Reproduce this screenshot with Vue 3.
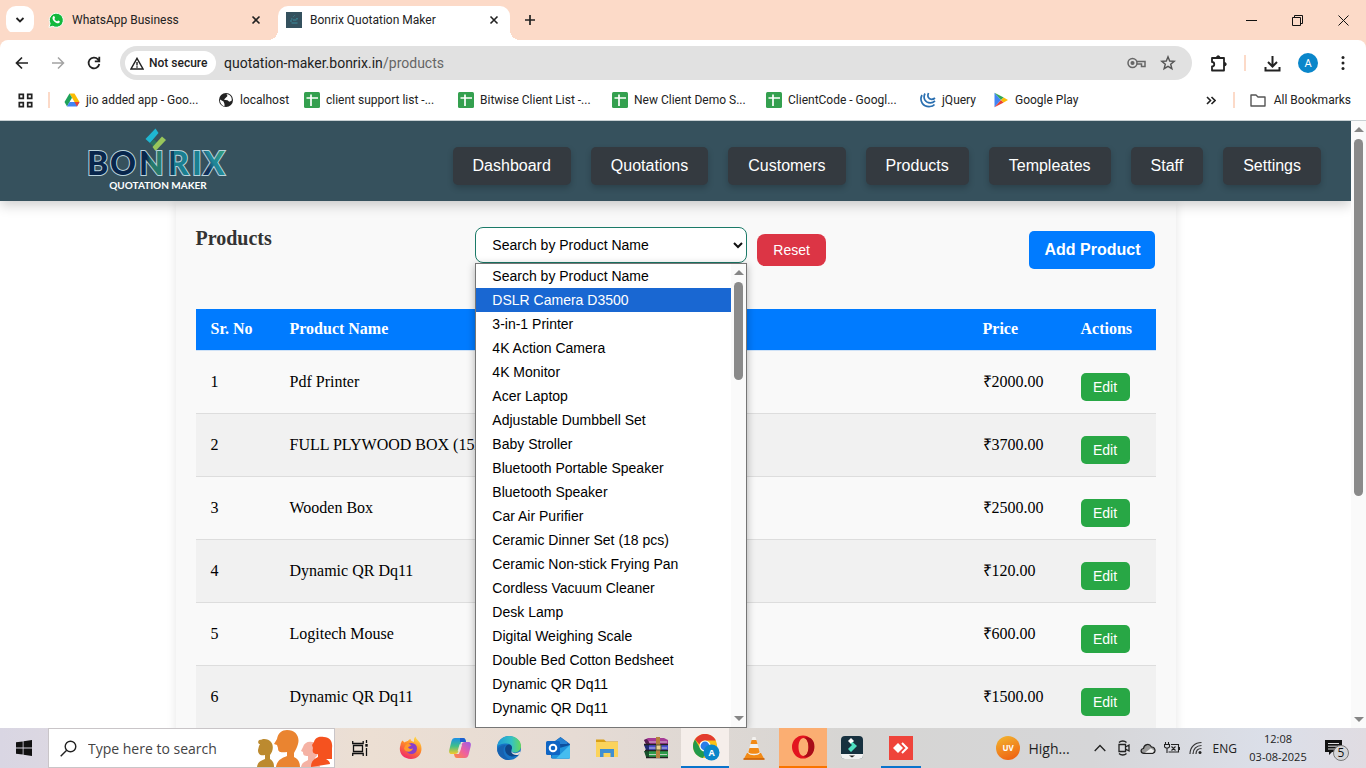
<script setup>
import { ref } from 'vue'

const bookmarks = [
  { icon: 'drive', label: 'jio added app - Goo...', size: 'long' },
  { icon: 'globe', label: 'localhost', size: 'host' },
  { icon: 'sheet', label: 'client support list -...', size: 'long' },
  { icon: 'sheet', label: 'Bitwise Client List -...', size: 'long' },
  { icon: 'sheet', label: 'New Client Demo S...', size: 'long' },
  { icon: 'sheet', label: 'ClientCode - Googl...', size: 'long' },
  { icon: 'jquery', label: 'jQuery', size: 'short' },
  { icon: 'play', label: 'Google Play', size: 'long' }
]

const nav = ['Dashboard', 'Quotations', 'Customers', 'Products', 'Templeates', 'Staff', 'Settings']

const options = [
  'Search by Product Name', 'DSLR Camera D3500', '3-in-1 Printer', '4K Action Camera', '4K Monitor',
  'Acer Laptop', 'Adjustable Dumbbell Set', 'Baby Stroller', 'Bluetooth Portable Speaker',
  'Bluetooth Speaker', 'Car Air Purifier', 'Ceramic Dinner Set (18 pcs)', 'Ceramic Non-stick Frying Pan',
  'Cordless Vacuum Cleaner', 'Desk Lamp', 'Digital Weighing Scale', 'Double Bed Cotton Bedsheet',
  'Dynamic QR Dq11', 'Dynamic QR Dq11'
]
const highlighted = ref(1)
const selected = ref('Search by Product Name')

const products = [
  { name: 'Pdf Printer', price: '₹2000.00' },
  { name: 'FULL PLYWOOD BOX (15x', price: '₹3700.00' },
  { name: 'Wooden Box', price: '₹2500.00' },
  { name: 'Dynamic QR Dq11', price: '₹120.00' },
  { name: 'Logitech Mouse', price: '₹600.00' },
  { name: 'Dynamic QR Dq11', price: '₹1500.00' }
]
</script>

<template>
  <div class="screen">
    <header class="tabs">
      <button class="tab-search" aria-label="Search tabs">
        <svg width="12" height="12" viewBox="0 0 12 12"><path d="M2.500 4l3.500 3.500L9.500 4" fill="none" stroke="#222" stroke-width="1.800" /></svg>
      </button>
      <div class="tab">
        <svg width="16" height="16" viewBox="0 0 16 16">
          <path d="M1 15.300l1.100-3.800A7 7 0 1 1 4.800 14.300z" fill="#12b83c" stroke="#fff" stroke-width="1" />
          <path d="M5.300 4.300c.5-.5 1-.3 1.200.2l.5 1.200c.1.500-.6.900-.6 1.200.5 1.200 1.500 2 2.600 2.400.5 0 .8-.9 1.200-.8l1.500.8c.4.300-.1 1.400-.8 1.800-2.500 1-6.500-2.600-6.400-5.200 0-.7.400-1.300.8-1.600z" fill="#fff" />
        </svg>
        <span class="tab-title">WhatsApp Business</span>
        <button class="tab-close" aria-label="Close tab">
          <svg width="10" height="10" viewBox="0 0 10 10"><path d="M1.500 1.500l7 7M8.500 1.500l-7 7" stroke="#222" stroke-width="1.600" /></svg>
        </button>
      </div>
      <div class="tab active">
        <svg width="16" height="16" viewBox="0 0 16 16">
          <rect width="16" height="16" fill="#34515e" />
          <path d="M7.500 4.500l1-1M5 7h1.500M7 8h3.500M4 9h2M5.500 11h6M10 6.800h2" stroke="#3a8c9c" stroke-width="1" />
        </svg>
        <span class="tab-title">Bonrix Quotation Maker</span>
        <button class="tab-close" aria-label="Close tab">
          <svg width="10" height="10" viewBox="0 0 10 10"><path d="M1.500 1.500l7 7M8.500 1.500l-7 7" stroke="#222" stroke-width="1.600" /></svg>
        </button>
      </div>
      <button class="tab-new" aria-label="New tab">
        <svg width="12" height="12" viewBox="0 0 12 12"><path d="M6 1v10M1 6h10" stroke="#222" stroke-width="1.700" /></svg>
      </button>
      <div class="win">
        <button aria-label="Minimize"><svg width="11" height="11" viewBox="0 0 11 11"><path d="M0 5.500h11" stroke="#111" /></svg></button>
        <button aria-label="Restore"><svg width="11" height="11" viewBox="0 0 11 11" fill="none" stroke="#111"><path d="M.5 2.500h8v8h-8zM2.500 2.500v-2h8v8h-2" /></svg></button>
        <button aria-label="Close window"><svg width="11" height="11" viewBox="0 0 11 11"><path d="M.5 .5l10 10M10.500 .5l-10 10" stroke="#111" /></svg></button>
      </div>
    </header>

    <div class="toolbar">
      <button class="tool" aria-label="Back"><svg width="14" height="14" viewBox="0 0 14 14" fill="none" stroke="#222" stroke-width="1.700"><path d="M13 7H2M7 1.500L1.500 7 7 12.500" /></svg></button>
      <button class="tool" aria-label="Forward"><svg width="14" height="14" viewBox="0 0 14 14" fill="none" stroke="#a3a3a3" stroke-width="1.500"><path d="M1 7h11M7 1.500L12.500 7 7 12.500" /></svg></button>
      <button class="tool" aria-label="Reload"><svg width="14" height="14" viewBox="0 0 14 14" fill="none" stroke="#222" stroke-width="1.800"><path d="M12.300 8A5.400 5.400 0 1 1 11 3.300L12.300 4.600M12.300 .8v4.500H7.800" /></svg></button>
      <div class="omnibox">
        <button class="secure">
          <svg width="14" height="13" viewBox="0 0 14 13" fill="none" stroke="#222" stroke-width="1.400"><path d="M7 1.300L13 12H1zM7 5v3.500M7 9.300v1.400" /></svg>
          <span>Not secure</span>
        </button>
        <div class="url"><input aria-label="Address" value="quotation-maker.bonrix.in" /><span>/products</span></div>
        <button class="omni-btn" aria-label="Passwords">
          <svg width="19" height="12" viewBox="0 0 19 12" fill="none" stroke="#666" stroke-width="1.500"><circle cx="5.500" cy="6" r="4.500" /><circle cx="5.500" cy="6" r="1.300" fill="#666" /><path d="M9.800 4.500H18v5h-3.500V7H9.800" /></svg>
        </button>
        <button class="omni-btn" aria-label="Bookmark this page">
          <svg width="16" height="16" viewBox="0 0 16 16" fill="none" stroke="#555" stroke-width="1.400"><path d="M8 1.800l1.700 4.200 4.500.3-3.500 2.900 1.200 4.500L8 11.300l-3.900 2.400 1.200-4.500L1.800 6.300 6.300 6z" /></svg>
        </button>
      </div>
      <button class="tool ext" aria-label="Extensions">
        <svg width="18" height="17" viewBox="0 0 18 17" fill="none" stroke="#222" stroke-width="1.800" stroke-linejoin="round"><path d="M2 3h12v12.500H2v-4c3 0 3-4.500 0-4.500z" /><path d="M6.500 2.500a1.700 1.700 0 0 1 3.400 0zM14.500 7.500a1.700 1.700 0 0 1 0 3.400z" fill="#222" stroke-width="1" /></svg>
      </button>
      <i class="bar"></i>
      <button class="tool" aria-label="Downloads"><svg width="17" height="17" viewBox="0 0 17 17" fill="none" stroke="#222" stroke-width="2"><path d="M8.500 1v10M4 7l4.500 4.500L13 7M1.500 12v3.500h14V12" /></svg></button>
      <button class="avatar">A</button>
      <button class="tool more" aria-label="Menu"><svg width="4" height="16" viewBox="0 0 4 16" fill="#222"><circle cx="2" cy="2.500" r="1.500" /><circle cx="2" cy="8" r="1.500" /><circle cx="2" cy="13.500" r="1.500" /></svg></button>
    </div>

    <nav class="bookmarks">
      <button class="apps" aria-label="Apps"><svg width="15" height="15" viewBox="0 0 15 15" fill="none" stroke="#222" stroke-width="1.700"><path d="M1.300 1.300h4v4h-4zM9.700 1.300h4v4h-4zM1.300 9.700h4v4h-4zM9.700 9.700h4v4h-4z" /></svg></button>
      <i class="bar"></i>
      <a v-for="(b, i) in bookmarks" :key="i" href="#" class="bm" :class="b.size">
        <svg v-if="b.icon === 'drive'" width="16" height="16" viewBox="0 0 16 16">
          <path d="M5.500 1.500h5L15.500 10h-5z" fill="#fbbc04" /><path d="M5.500 1.500L8 5.800 3 14.500.5 10z" fill="#1ea25a" /><path d="M3 14.500L5.500 10h10L13 14.500z" fill="#4285f4" /><path d="M13 14.500L10.500 10h5z" fill="#ea4335" />
        </svg>
        <svg v-else-if="b.icon === 'globe'" width="16" height="16" viewBox="0 0 16 16">
          <circle cx="8" cy="8" r="7" fill="#222" /><path d="M2 7.500l3.500 2 1 2.500v2.300C4 13.500 1.800 11 2 7.500zM8.500 2l1 2L7 6.500l-1 1.200 3.500.5 1.800 1.600 2.300-1c.7-2-.3-4.500-2.500-6z" fill="#fff" />
        </svg>
        <svg v-else-if="b.icon === 'sheet'" width="16" height="16" viewBox="0 0 16 16">
          <rect width="16" height="16" rx="1.500" fill="#34a04f" /><path d="M2.500 6h11.500M7 2.500V14" stroke="#fff" stroke-width="1.700" />
        </svg>
        <svg v-else-if="b.icon === 'jquery'" width="16" height="16" viewBox="0 0 16 16" fill="none" stroke="#2a6fb0" stroke-width="1.700">
          <path d="M2 3c-3 6 1 12 8 11.500 2 0 3.500-.8 4.500-2M5 1.500c-2.500 5 .5 9.500 5.500 9.300 2 0 3.300-.8 4.500-2M8.500 1c-1.500 3.500 0 6.300 3 6.300 1.500 0 2.500-.4 3.500-1.300" />
        </svg>
        <svg v-else width="16" height="16" viewBox="0 0 16 16">
          <path d="M1.500.8v14.500L8 8z" fill="#4285f4" /><path d="M1.500.8L8 8l2.700-2.600z" fill="#34a853" /><path d="M1.500 15.300L8 8l2.700 2.600z" fill="#ea4335" /><path d="M10.700 5.400L15 8l-4.300 2.600L8 8z" fill="#fbbc04" />
        </svg>
        <span>{{ b.label }}</span>
      </a>
      <button class="overflow" aria-label="More bookmarks"><svg width="10" height="9" viewBox="0 0 10 9" fill="none" stroke="#222" stroke-width="1.600"><path d="M1 1l3.500 3.500L1 8M5.500 1L9 4.500 5.500 8" /></svg></button>
      <i class="bar"></i>
      <a href="#" class="bm all">
        <svg width="16" height="13" viewBox="0 0 16 13" fill="none" stroke="#555" stroke-width="1.400"><path d="M1 1h5l2 2h7v9H1z" stroke-linejoin="round" /></svg>
        <span>All Bookmarks</span>
      </a>
    </nav>

    <div class="viewport">
      <div class="page">
        <header class="site">
          <svg class="logo" width="150" height="80" viewBox="0 0 150 80" role="img" aria-label="Bonrix Quotation Maker">
            <defs>
              <linearGradient id="gn" x1="0" x2="1"><stop offset=".3" stop-color="#08264c" /><stop offset=".5" stop-color="#277a6c" /></linearGradient>
              <linearGradient id="gr" x1="0" x2="1"><stop offset=".28" stop-color="#0d4164" /><stop offset=".3" stop-color="#1a7f91" /></linearGradient>
              <linearGradient id="gx" x1="0" y1="1" x2="1" y2="0"><stop offset=".3" stop-color="#10305a" /><stop offset=".5" stop-color="#20869a" /><stop offset="1" stop-color="#3aa46d" /></linearGradient>
            </defs>
            <path d="M64.500 18L74.500 7.500 77.500 12 69 22z" fill="#1fb6d2" />
            <path d="M69 22l4-3.500 3.500 3.500-3.500 4z" fill="#2b7460" />
            <path d="M71.500 26L81 15.500l4 3.500L74.500 30z" fill="#98c65b" />
            <g class="word">
              <text x="6" y="54" fill="#08264c">B</text>
              <text x="29" y="54" fill="#08264c">O</text>
              <text x="58" y="54" fill="url(#gn)">N</text>
              <text x="87" y="54" fill="url(#gr)">R</text>
              <text x="111" y="54" fill="#1a7f91">I</text>
              <text x="122" y="54" fill="url(#gx)">X</text>
            </g>
            <text x="77" y="68" class="sub">QUOTATION MAKER</text>
          </svg>
          <nav class="menu"><a v-for="n in nav" :key="n" href="#">{{ n }}</a></nav>
        </header>
        <main class="card">
          <div class="head">
            <h1>Products</h1>
            <div class="filter">
              <div class="picker">
                <select v-model="selected" aria-label="Search by product name"><option>Search by Product Name</option></select>
                <svg class="caret" width="10" height="7" viewBox="0 0 10 7"><path d="M1 1l4 4 4-4" fill="none" stroke="#111" stroke-width="2" /></svg>
                <div class="popup">
                  <ul role="listbox" aria-label="Products">
                    <li v-for="(o, i) in options" :key="i" role="option" :aria-selected="i === highlighted" :class="{ on: i === highlighted }" @mouseenter="highlighted = i">{{ o }}</li>
                  </ul>
                  <div class="scroll">
                    <i class="up"></i><i class="thumb"></i><i class="down"></i>
                  </div>
                </div>
              </div>
              <button class="reset">Reset</button>
            </div>
            <button class="add">Add Product</button>
          </div>
          <table>
            <thead>
              <tr><th class="c-no">Sr. No</th><th>Product Name</th><th class="c-price">Price</th><th class="c-act">Actions</th></tr>
            </thead>
            <tbody>
              <tr v-for="(p, i) in products" :key="i">
                <td>{{ i + 1 }}</td><td>{{ p.name }}</td><td>{{ p.price }}</td><td><button class="edit">Edit</button></td>
              </tr>
            </tbody>
          </table>
        </main>
      </div>
      <div class="scroll main-scroll"><i class="up"></i><i class="thumb"></i><i class="down"></i></div>
    </div>

    <footer class="taskbar">
      <button class="start" aria-label="Start"><svg width="16" height="16" viewBox="0 0 16 16" fill="#111"><path d="M0 2.300L6.700 1.400V7.600H0zM7.500 1.300L16 0v7.600H7.500zM0 8.400h6.700v6.200L0 13.700zM7.500 8.400H16V16l-8.500-1.300z" /></svg></button>
      <div class="search">
        <svg width="17" height="17" viewBox="0 0 17 17" fill="none" stroke="#222" stroke-width="1.400"><circle cx="10.500" cy="6.500" r="5.300" /><path d="M6.700 10.300L.7 16.300" /></svg>
        <input aria-label="Search" placeholder="Type here to search" />
        <svg class="art" width="78" height="38" viewBox="0 0 78 38">
          <path d="M45 38c1-5 4-5 7-7v-4c-4 0-5-1-5-4l-2-1 2-4c1-4 5-6 9-5 6 0 8 5 7 9-1 4-3 6-4 7v3c3 2 5 4 5 6z" fill="#f5b2a4" />
          <path d="M1 38c1-6 4-6 8-8v-4c-5 1-7-1-7-5l1-4 1-2c-3 0-2-5 1-4 2-2 8-1 10 2 3 4 2 9-1 13v4c3 2 4 4 4 8z" fill="#bc8a2f" />
          <path d="M20 38c1-7 6-9 11-11v-4c-7 1-9 0-9-4l-1-3-3-1 3-5C22 4 26 1 31 1c9 0 13 7 11 14-1 4-3 7-4 9v4c4 2 6 5 6 10z" fill="#ea8430" />
          <path d="M55 38c0-6 3-8 7-10v-3c-5 0-6-2-5-6l-1-3 2-3c1-5 6-6 10-5 6 0 9 5 8 11v11h-6c3 2 4 3 4 5z" fill="#f5521f" />
        </svg>
      </div>
      <div class="apps-row">
        <button class="app tv" aria-label="Task view"><svg width="17" height="17" viewBox="0 0 17 17" fill="none" stroke="#111" stroke-width="1.300"><path d="M.7 1v2.500h10.500V1M1.500 5.500h9v6h-9zM.7 16v-2.500h10.500V16M14.500 0v3M14.500 8v8" /><path d="M13.300 4h2.400v2.700h-2.400z" fill="#111" stroke="none" /></svg></button>
        <button class="app" aria-label="Firefox"><svg width="24" height="24" viewBox="0 0 24 24">
          <defs><linearGradient id="ff" x1=".8" y1="0" x2=".3" y2="1"><stop offset="0" stop-color="#ffe14a" /><stop offset=".45" stop-color="#ff8a28" /><stop offset="1" stop-color="#f0266c" /></linearGradient></defs>
          <path d="M3.500 4.500l2 2C7 5.500 8 5 9 5c.5-1 1.500-2 2.500-2 0 2 2 2.500 3.500 3-.3-2 0-4 1.500-5.500.5 3 3.500 4 5 7.500 3 7-1 15-9.500 15S-1 16 1.500 9c.3-2 1-3.500 2-4.500z" fill="url(#ff)" />
          <circle cx="12.500" cy="12.500" r="5.500" fill="#8a3fc8" /><path d="M6 10c2-3 5-2 6.500-.5-1.500.2-2 1.500-3.500 1.500.5 2 3 2.500 5 1.500-1 4-7.500 4.500-9 0z" fill="#ff9a2b" />
        </svg></button>
        <button class="app" aria-label="Copilot"><svg width="24" height="24" viewBox="0 0 24 24">
          <defs><linearGradient id="cp1" x1="0" y1="0" x2="0" y2="1"><stop offset="0" stop-color="#1c8fe8" /><stop offset=".5" stop-color="#3fbf8a" /><stop offset="1" stop-color="#f5c92a" /></linearGradient><linearGradient id="cp2" x1="1" y1="0" x2="0" y2="1"><stop offset="0" stop-color="#9a5ce8" /><stop offset=".5" stop-color="#ee5fa0" /><stop offset="1" stop-color="#ff8a3c" /></linearGradient></defs>
          <path d="M7 2h8c2 0 2.500 1.500 3 4l-5 0-2.500 9c-.5 2-1.500 3-3.500 3H3.500C1 18 .7 15.500 1.500 13l2-8C4.200 3 5 2 7 2z" fill="url(#cp1)" />
          <path d="M12 2h3c2 0 2.500 1.500 3 4h-6z" fill="#1d5fd0" />
          <path d="M17 22H9c-2 0-2.500-1.500-3-4l5 0L13.500 9c.5-2 1.500-3 3.500-3h3.500c2.500 0 2.800 2.500 2 5l-2 8c-.7 2-1.500 3-3.500 3z" fill="url(#cp2)" />
          <path d="M10.800 15.500l2-7" stroke="#eadfd8" stroke-width="2.500" />
        </svg></button>
        <button class="app" aria-label="Edge"><svg width="24" height="24" viewBox="0 0 24 24">
          <defs><linearGradient id="ed" x1="0" x2="1"><stop offset="0" stop-color="#1f9ad8" /><stop offset=".6" stop-color="#35c1c4" /><stop offset="1" stop-color="#66d95a" /></linearGradient></defs>
          <circle cx="12" cy="12" r="12" fill="#1673c4" />
          <path d="M0 11C1 4 6 0 12 0c7 0 12 4.500 12 10 0 4-3 6.500-6.500 6.500-3 0-4-1.500-3-3C16 10 13.500 7.500 9.500 7.500 5 7.500 1 9 0 11z" fill="url(#ed)" />
          <path d="M9 9c-4 3-3.500 11 4 15-7 .5-12-4-12.800-10C2 10 5 9 9 9z" fill="#1762b0" />
          <path d="M14.500 13.500c1-2 .5-4-2-5-4 0-5 4-4 7 1.500 4.500 7 6.500 13 3.500-4 .5-8-1-7-5.500z" fill="#0f4687" />
          <path d="M14.300 15c1 2.500 5 3 8.700.5l.5 1.500-2.500 2c-3.500.2-6.700-1-6.700-4z" fill="#e9ded8" />
        </svg></button>
        <button class="app" aria-label="Outlook"><svg width="24" height="24" viewBox="0 0 24 24">
          <path d="M5 8L14.500 1 24 8v13c0 1-.7 1.500-1.500 1.500h-16C5.500 22.500 5 22 5 21z" fill="#0f5fb8" /><path d="M8 6l6.500-4.500L21 6v9H8z" fill="#2580d2" /><path d="M14 8h8l2 1-9.500 7z" fill="#0d4f9e" /><path d="M5 21l5-8L24 9v12c0 1-.7 1.500-1.500 1.500h-16z" fill="#1f93dc" /><path d="M24 9L10 22.500h12.500c1 0 1.500-.5 1.500-1.500z" fill="#45bdf0" />
          <rect y="5" width="14" height="14" rx="1.500" fill="#0f65c4" /><circle cx="7" cy="12" r="3.300" fill="none" stroke="#fff" stroke-width="2" />
        </svg></button>
        <button class="app" aria-label="File Explorer"><svg width="24" height="24" viewBox="0 0 24 24">
          <path d="M1 3.500h8l2 2H23V20H1z" fill="#d9a018" /><path d="M1 6h22v15H1z" fill="#fbd35b" /><path d="M5 13h14v8h-3.500v-4h-7v4H5z" fill="#3f8fd2" />
        </svg></button>
        <button class="app" aria-label="WinRAR"><svg width="26" height="22" viewBox="0 0 26 22">
          <path d="M1 3l4-2h16l4 2v4H3z" fill="#a63a96" /><path d="M1 3l3-1 3 5H3z" fill="#552050" /><path d="M2 7h23v6H4z" fill="#4a4fd0" /><path d="M1 8h5v5H3z" fill="#222b73" /><path d="M3 13h22v7H4z" fill="#2e9b4a" /><path d="M1 14h5v6H3z" fill="#17502a" /><path d="M1 7.500h24M2 13.500h23M3 20.500h22" stroke="#222" stroke-width="1.300" /><path d="M6 5h18M6 11h18M6 17.500h18" stroke="#ddd" stroke-width=".8" />
          <path d="M13 0h4v21h-4z" fill="#b5813d" /><path d="M13 8h5v5h-5z" fill="#ead092" stroke="#553" />
        </svg></button>
        <button class="app current" aria-label="Chrome"><svg width="28" height="28" viewBox="0 0 28 28">
          <circle cx="12" cy="13" r="12" fill="#fbc116" /><path d="M12 1c5 0 9 2.500 10.800 6.500H12c-3 0-5 2-5.300 4L2 6.500C4 3 8 1 12 1z" fill="#e33b2e" /><path d="M2 6.500l5.300 9C8.500 18 11 18.800 13.500 18L10 25C4 24 0 19 0 13c0-2.500.8-4.800 2-6.500z" fill="#229a4b" />
          <circle cx="12" cy="13" r="5.600" fill="#fff" /><circle cx="12" cy="13" r="4.400" fill="#2a7de8" />
          <circle cx="18.500" cy="19.500" r="8" fill="#0a86ca" /><text x="18.500" y="23" class="mini">A</text>
        </svg></button>
        <button class="app" aria-label="VLC"><svg width="22" height="24" viewBox="0 0 22 24">
          <path d="M4 17h14l3.500 6.500H.5z" fill="#f28a16" /><path d="M9.500 1h3L17 17c-1.500 3-10.500 3-12 0z" fill="#f3f1ee" /><path d="M8.600 4h4.800l1.100 4H7.500zM6.500 12h9l1.200 4.300c-2 2-9.500 2-11.400 0z" fill="#f28a16" /><path d="M.5 23h21" stroke="#c85f0a" stroke-width="1.500" />
        </svg></button>
        <button class="app opera" aria-label="Opera"><svg width="24" height="24" viewBox="0 0 24 24">
          <path fill-rule="evenodd" d="M12 .5a11 11.500 0 1 0 0 23 11 11.500 0 0 0 0-23zM12.500 3c3 0 5 4 5 9s-2 9-5 9-5-4-5-9 2-9 5-9z" fill="#e3141f" /><path d="M13 3c7-3 12 4 10 12-1.500 6-7 8.500-10.500 6 3 0 5-4 5-9s-2-9-4.500-9z" fill="#a80d18" />
        </svg></button>
        <button class="app" aria-label="Filmora"><svg width="22" height="24" viewBox="0 0 22 24">
          <rect width="22" height="23" rx="4" fill="#17313f" /><path d="M7 5l3-3 3 3-3 3z" fill="#fff" /><path d="M7 13l4-4-1.500-1.500 2-1.500 4.500 4-6 6z" fill="#4fe0c2" /><path d="M0 18h22v1c0 3-1.500 4-4 4H4c-2.500 0-4-1-4-4z" fill="#f2f2f2" /><path d="M8 19.500h6l-3 2z" fill="#222" />
        </svg></button>
        <button class="app desk" aria-label="AnyDesk"><svg width="24" height="24" viewBox="0 0 24 24">
          <rect width="24" height="24" fill="#ef443b" /><path d="M4 12l5-5 5 5-5 5z" fill="#fff" /><path d="M13 7l5 5-5 5" fill="none" stroke="#fff" stroke-width="2" />
        </svg></button>
      </div>
      <button class="weather">
        <svg width="24" height="24" viewBox="0 0 24 24"><defs><linearGradient id="uv" x1=".2" y1="0" x2=".6" y2="1"><stop offset="0" stop-color="#f2b22e" /><stop offset="1" stop-color="#ef6413" /></linearGradient></defs><circle cx="12" cy="12" r="12" fill="url(#uv)" /><text x="12" y="15" class="mini uv">UV</text></svg>
        <span>High...</span>
      </button>
      <div class="tray">
        <svg width="12" height="8" viewBox="0 0 12 8" fill="none" stroke="#222" stroke-width="1.300"><path d="M.7 7L6 1.500 11.300 7" /></svg>
        <svg width="12" height="16" viewBox="0 0 12 16" fill="none" stroke="#222" stroke-width="1.300"><path d="M1 4.500h6.500v7H1zM7.500 7l3.500-2v6L7.500 9M1 2.500c2-2 5.500-2 7.500 0M1 13.500c2 2 5.500 2 7.500 0" /></svg>
        <svg width="16" height="11" viewBox="0 0 16 11" fill="#999" stroke="#222" stroke-width="1.200"><path d="M4 10.300C.5 10.300 0 6 3.500 5.500 4 1.500 9-.5 11.500 4c3.500-.3 5 5 1.500 6.300z" /><path d="M5 9.700l6-4.400 3 2.500-1.500 1.900z" fill="#eee" stroke="none" /></svg>
        <svg width="16" height="12" viewBox="0 0 16 12" fill="none" stroke="#222" stroke-width="1.100"><path d="M1.500 0v2.500M4.500 0v2.500M.5 2.500h5V5l-1.500 1H2L.5 5zM3 6v5M7 2.500h7.500v7.500H4.500M15.500 5v3M7.500 4.500l4 4M11.500 4.500l-4 4" /></svg>
        <svg width="14" height="14" viewBox="0 0 14 14" fill="none" stroke="#333" stroke-width="1.200"><path d="M1 13C1 6 6 1.500 12.500 1.500M4 13c0-5 3.500-8.500 8.500-8.500M7 13c0-3.500 2-5.500 5.500-5.500" /><circle cx="11" cy="11.500" r="1.500" fill="#222" stroke="none" /></svg>
      </div>
      <span class="lang">ENG</span>
      <div class="clock"><span>12:08</span><span>03-08-2025</span></div>
      <button class="notes" aria-label="Notifications">
        <svg width="26" height="26" viewBox="0 0 26 26"><path d="M1 5h17v12H8l-3 3v-3H1z" fill="#111" /><path d="M4 8.500h11M4 11.200h11M4 14h7" stroke="#ddd" stroke-width="1" /><circle cx="17" cy="18" r="7.500" fill="#d5d5d8" stroke="#777" /><text x="17" y="22" class="mini five">5</text></svg>
      </button>
    </footer>
  </div>
</template>

<style>
html, body { margin: 0; overflow: hidden; }
</style>

<style scoped>
* { box-sizing: border-box; }
button, input, select { margin: 0; padding: 0; border: 0; background: none; font: inherit; color: inherit; outline: none; }
a { color: inherit; text-decoration: none; }
svg { flex: none; display: block; }
.screen { display: flex; flex-direction: column; height: 100vh; background: #fff; font: 12px Roboto, "Open Sans", sans-serif; color: #222; overflow: hidden; }
.bar { width: 2px; height: 16px; background: #fcdac8; flex: none; }

.tabs { display: flex; align-items: flex-end; height: 40px; flex: none; padding-left: 6px; background: #fcdac8; }
.tab-search { display: grid; place-items: center; width: 28px; height: 28px; margin-bottom: 6px; border-radius: 10px; background: #fff; }
.tab { position: relative; display: flex; align-items: center; width: 232px; height: 34px; padding: 0 11px 6px 8px; gap: 8px; margin-left: 6px; border-radius: 10px 10px 0 0; }
.tab.active { background: #fff; }
.tab.active::before, .tab.active::after { content: ""; position: absolute; bottom: 0; width: 10px; height: 10px; }
.tab.active::before { left: -10px; background: radial-gradient(circle at 0 0, transparent 10px, #fff 10px); }
.tab.active::after { right: -10px; background: radial-gradient(circle at 100% 0, transparent 10px, #fff 10px); }
.tab-title { flex: 1; white-space: nowrap; }
.tab-new { margin: 0 0 14px 14px; }
.win { display: flex; margin-left: auto; height: 40px; }
.win button { display: grid; place-items: center; width: 46px; }

.toolbar { display: flex; align-items: center; height: 46px; flex: none; padding: 0 6px 0 4px; background: #fff; border-radius: 8px 8px 0 0; box-shadow: 0 -8px 0 0 #fcdac8; }
.tool { display: grid; place-items: center; width: 36px; height: 36px; flex: none; }
.omnibox { display: flex; align-items: center; flex: 1; height: 34px; margin-left: 8px; padding: 0 16px 0 5px; border-radius: 17px; background: #e1e1e1; }
.secure { display: flex; align-items: center; gap: 5px; width: 91px; height: 24px; padding-left: 5px; border-radius: 12px; background: #fff; font-weight: 500; white-space: nowrap; }
.url { display: flex; flex: 1; margin-left: 8px; font-size: 14px; color: #666; }
.url input { width: 159px; color: #222; }
.omni-btn { margin-left: 14px; }
.ext { margin-left: 9px; margin-right: 7px; }
.toolbar .bar + .tool { margin-left: 8px; }
.avatar { width: 20px; height: 20px; margin-left: 8px; border-radius: 50%; background: #0a86ca; color: #fff; font-size: 11px; }
.more { margin-left: 8px; width: 34px; }

.bookmarks { display: flex; align-items: center; height: 34px; flex: none; padding: 0 15px 6px 18px; background: #fff; }
.apps { margin-right: 15px; }
.bm { display: flex; align-items: center; gap: 6px; flex: none; white-space: nowrap; }
.apps + .bar + .bm { margin-left: 14px; }
.bm.long { width: 154px; }
.bm.host { width: 86px; }
.bm.short { width: 73px; }
.overflow { margin-left: auto; margin-right: 17px; }
.bm.all { margin-left: 15px; gap: 8px; }

.viewport { display: flex; flex: 1; min-height: 0; border-top: 1px solid #c8d0d3; overflow: hidden; }
.page { flex: 1; min-width: 0; overflow: hidden; background: #fff; }
.scroll { position: relative; display: flex; flex-direction: column; align-items: center; width: 15px; flex: none; background: #fafafa; padding: 6px 0; }
.up { border: 5px solid transparent; border-top: 0; border-bottom: 5px solid #868686; flex: none; }
.down { border: 5px solid transparent; border-bottom: 0; border-top: 5px solid #868686; margin-top: auto; flex: none; }
.thumb { width: 9px; height: 98px; margin-top: 7px; border-radius: 5px; background: #8a8a8a; flex: none; }
.main-scroll .thumb { height: 60%; }

.site { position: relative; z-index: 2; display: flex; align-items: center; height: 80px; padding: 0 30px 0 81px; background: #36515d; box-shadow: 0 4px 12px rgba(0, 0, 0, .2); }
.word { font: 900 32px Lato, sans-serif; stroke: #b9d3dc; stroke-width: 2px; paint-order: stroke; }
.sub { font: 700 10px Lato, sans-serif; fill: #fff; text-anchor: middle; }
.menu { display: flex; gap: 20px; margin: 10px 0 0 auto; font: 16px/18px "Liberation Sans", sans-serif; color: #fff; }
.menu a { padding: 10px 20px; border-radius: 5px; background: #343a40; box-shadow: 0 3px 6px rgba(0, 0, 0, .2); }

.card { max-width: 1000px; min-height: 800px; margin: 0 auto; padding: 20px; background: #f9f9f9; box-shadow: 0 0 10px rgba(0, 0, 0, .1); font: 16px/18px "Liberation Serif", serif; color: #000; }
.head { display: flex; justify-content: space-between; align-items: flex-start; height: 88px; }
h1 { margin: 6px 0 0; font-size: 20px; line-height: 23px; color: #333; }
.filter { display: flex; align-items: flex-start; gap: 10px; font: 14px/16px "Liberation Sans", sans-serif; }
.picker { position: relative; width: 272px; margin-top: 6px; }
.picker select { display: block; appearance: none; width: 100%; height: 36px; padding: 0 16px; border: 1px solid #1b7a68; border-radius: 8px; background: #fff; color: #000; }
.caret { position: absolute; right: 4px; top: 15px; }
.popup { position: absolute; top: 100%; left: 0; right: 0; display: flex; height: 465px; border: 1px solid #767676; background: #fff; box-shadow: 0 2px 8px rgba(0, 0, 0, .3); }
.popup ul { flex: 1; margin: 0; padding: 0; list-style: none; }
.popup li { height: 24px; padding: 0 16px; line-height: 24px; color: #000; }
.popup li.on { background: #1967d2; color: #fff; }
.reset { height: 32px; margin-top: 13px; padding: 0 16px; border-radius: 8px; background: #dc3545; color: #fff; }
.add { height: 38px; margin-top: 10px; padding: 0 15px; border-radius: 5px; background: #007bff; color: #fff; font: 700 16px "Liberation Sans", sans-serif; }
table { width: 100%; border-collapse: separate; border-spacing: 0; table-layout: fixed; }
th, td { padding: 12px 15px; text-align: left; white-space: nowrap; border-bottom: 1px solid #ddd; }
th { height: 42px; padding: 11px 15px 12px; background: #007bff; color: #fff; border-bottom-color: #cfe2f7; }
.c-no { width: 79px; }
.c-price { width: 98px; }
.c-act { width: 90px; }
tbody tr:nth-child(even) { background: #f1f1f1; }
.edit { display: block; width: 49px; height: 28px; margin-top: 10px; border-radius: 5px; background: #28a745; color: #fff; font: 14px "Liberation Sans", sans-serif; }

.taskbar { display: flex; align-items: center; height: 40px; flex: none; font-family: "Open Sans", "Noto Sans", sans-serif; background: linear-gradient(90deg, #d9d6e3 0, #e2dbdf 12%, #ecdfd3 27%, #e6dbd4 42%, #d6d5d3 62%, #d6d6d8 80%, #dbdfe9 93%, #e0dce2 100%); }
.start { display: grid; place-items: center; width: 48px; height: 40px; flex: none; }
.search { display: flex; align-items: center; width: 287px; height: 40px; flex: none; padding-left: 11px; border: 1px solid #c9c5c8; background: #fff; }
.search input { width: 156px; padding-left: 11px; font-size: 14px; flex: 1; }
.search input::placeholder { color: #444; opacity: 1; }
.apps-row { display: flex; gap: 1px; margin-left: 1px; }
.app { display: grid; place-items: center; width: 48px; height: 40px; flex: none; }
.tv { margin-right: 2px; }
.current { background: #f5eeea; border-bottom: 2px solid #0a74cc; }
.current svg { margin-left: 4px; }
.opera { background: #fbae72; border-bottom: 2px solid #f97400; }
.desk { background: linear-gradient(#0a74cc, #0a74cc) center bottom / 40px 2px no-repeat; }
.mini { font: 700 9px "Open Sans", sans-serif; fill: #fff; text-anchor: middle; }
.uv { font-size: 8px; }
.five { font-size: 12px; font-weight: 400; fill: #111; }
.weather { display: flex; align-items: center; gap: 8px; margin-left: auto; font-size: 14px; }
.tray { display: grid; grid-template-columns: repeat(5, 24px); align-items: center; justify-items: center; margin-left: 18px; }
.lang { margin-left: 5px; }
.clock { display: flex; flex-direction: column; align-items: center; margin-left: 11px; width: 60px; line-height: 18px; font-size: 11px; white-space: nowrap; }
.notes { margin: 0 16px 0 16px; }
</style>
